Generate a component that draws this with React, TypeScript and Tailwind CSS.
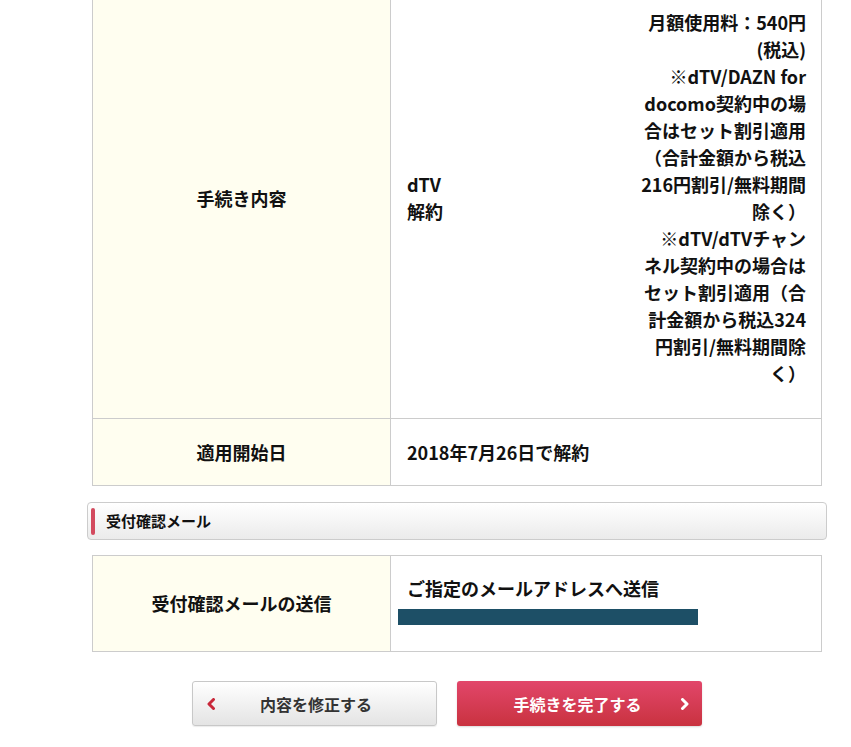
import React from 'react';

const font = { fontFamily: '"Noto Sans CJK JP", "Noto Sans", sans-serif' };

const feeLines = [
  '月額使用料：540円',
  '(税込)',
  '※dTV/DAZN for',
  'docomo契約中の場',
  '合はセット割引適用',
  '（合計金額から税込',
  '216円割引/無料期間',
  '除く）',
  '※dTV/dTVチャン',
  'ネル契約中の場合は',
  'セット割引適用（合',
  '計金額から税込324',
  '円割引/無料期間除',
  'く）',
];

const labelCell =
  'w-[298px] border border-[#cccccc] bg-[#fffef0] text-center align-middle font-bold text-[18px] leading-[27px] text-[#111]';
const valueCell = 'border border-[#cccccc] bg-white align-middle font-bold text-[18px] leading-[27px] text-[#111]';

const App: React.FC = () => {
  return (
    <div className="min-h-screen w-full overflow-hidden bg-white" style={font}>
      <div className="ml-[92px] -mt-[23px] w-[730px]">
        <table className="w-full border-collapse">
          <tbody>
            <tr>
              <td className={labelCell}>手続き内容</td>
              <td className={valueCell}>
                <div className="flex items-center justify-between pl-4 pr-[15px] py-[31px]">
                  <div>
                    dTV
                    <br />
                    解約
                  </div>
                  <div className="text-right">
                    {feeLines.map((l, i) => (
                      <div key={i}>{l}</div>
                    ))}
                  </div>
                </div>
              </td>
            </tr>
            <tr>
              <td className={`${labelCell} h-[67px]`}>適用開始日</td>
              <td className={`${valueCell} pl-4`}>2018年7月26日で解約</td>
            </tr>
          </tbody>
        </table>
      </div>

      <div className="ml-[87px] mt-[16px] flex h-[38px] w-[740px] items-center rounded-[4px] border border-[#cccccc] bg-gradient-to-b from-white to-[#ebebeb] pl-[3px]">
        <span className="h-[27px] w-[4px] rounded-full bg-[#d34a5e]" />
        <span className="ml-[11px] text-[15px] font-bold text-[#111]">受付確認メール</span>
      </div>

      <div className="ml-[92px] mt-[15px] w-[730px]">
        <table className="w-full border-collapse">
          <tbody>
            <tr>
              <td className={`${labelCell} h-[96px]`}>受付確認メールの送信</td>
              <td className={`${valueCell} pl-4 pb-[4px]`}>
                <div>ご指定のメールアドレスへ送信</div>
                <div className="flex h-[27px] items-start pt-[7px]">
                  <div className="-ml-[9px] h-[16px] w-[300px] bg-[#1d4f66]" />
                </div>
              </td>
            </tr>
          </tbody>
        </table>
      </div>

      <div className="ml-[192px] mt-[29px] flex gap-[20px]">
        <button className="relative flex h-[45px] w-[245px] items-center justify-center rounded-[3px] border border-[#c8c8c8] bg-gradient-to-b from-white to-[#e4e4e4] text-[16px] font-bold text-[#333] shadow-[0_1px_1px_rgba(0,0,0,0.08)]">
          <svg className="absolute left-[13px] top-1/2 -translate-y-1/2" width="10" height="12" viewBox="0 0 10 12">
            <polyline points="7.5,1.5 3,6 7.5,10.5" fill="none" stroke="#c9283a" strokeWidth="3" strokeLinecap="round" strokeLinejoin="round" />
          </svg>
          <span className="ml-[3px]">内容を修正する</span>
        </button>
        <button className="relative flex h-[45px] w-[245px] items-center justify-center rounded-[3px] bg-gradient-to-b from-[#e2466a] to-[#c9323f] text-[16px] font-bold text-white shadow-[0_1px_2px_rgba(0,0,0,0.15)]">
          <span className="ml-[-4px]">手続きを完了する</span>
          <svg className="absolute right-[12px] top-1/2 -translate-y-1/2" width="10" height="12" viewBox="0 0 10 12">
            <polyline points="2.5,1.5 7,6 2.5,10.5" fill="none" stroke="#ffffff" strokeWidth="3" strokeLinecap="round" strokeLinejoin="round" />
          </svg>
        </button>
      </div>
    </div>
  );
};

export default App;
